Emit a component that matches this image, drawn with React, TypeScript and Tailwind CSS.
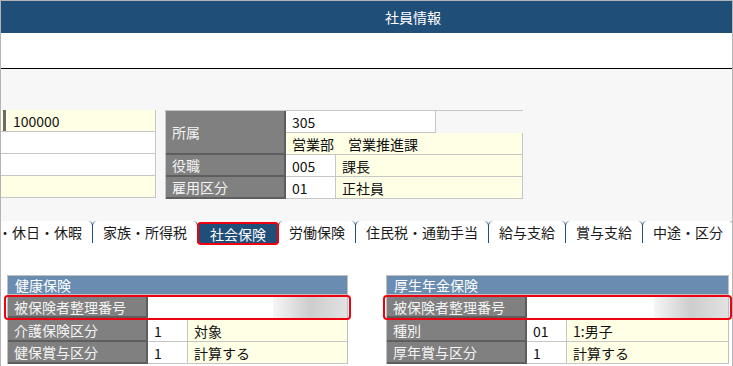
import React from 'react'

const Label = ({ text, className = '' }: { text: string; className?: string }) => (
  <div
    className={`flex shrink-0 items-center whitespace-nowrap border-b-2 border-r-2 border-[#5e5e5e] bg-[#808080] pl-[6px] text-[#f4f4f4] ${className}`}
  >
    {text}
  </div>
)

const Cell = ({
  text,
  yellow,
  className = '',
}: {
  text?: string
  yellow?: boolean
  className?: string
}) => (
  <div
    className={`flex items-center whitespace-nowrap border-b border-r border-[#c6c6c6] pl-[6px] text-[#111] ${
      yellow ? 'bg-[#ffffe6]' : 'bg-white'
    } ${className}`}
  >
    {text}
  </div>
)

// blurred-out value at the right end of the row
const Blur = () => (
  <div className="flex h-full flex-1 items-stretch justify-end bg-white">
    <div className="w-[74px] bg-gradient-to-r from-[#f6f6f6] via-[#cdcdcd] to-[#e2e2e2]" />
  </div>
)

const Section = ({
  title,
  rows,
}: {
  title: string
  rows: Array<{ label: string; code: string; name: string }>
}) => (
  <div className="flex flex-col">
    <div className="flex h-[20px] items-center border border-[#c0c0c0] bg-[#6a8cb0] pl-[7px] text-white">
      {title}
    </div>
    {/* highlighted row */}
    <div className="-mx-[3px] rounded-[4px] border-[2.5px] border-[#ee0010] px-px">
      <div className="flex h-[21px] border-x border-[#c0c0c0]">
        <Label text="被保険者整理番号" className="w-[140px]" />
        <Blur />
      </div>
    </div>
    {rows.map((row) => (
      <div key={row.label} className="flex h-[22px] border-x border-[#c0c0c0]">
        <Label text={row.label} className="w-[140px]" />
        <Cell text={row.code} className="w-[40px] shrink-0" />
        <Cell text={row.name} yellow className="flex-1 border-r-0" />
      </div>
    ))}
  </div>
)

const tabs = ['家族・所得税', '社会保険', '労働保険', '住民税・通勤手当', '給与支給', '賞与支給', '中途・区分']

export default function App() {
  return (
    <div className="relative h-[366px] w-[733px] overflow-hidden border-x border-t border-[#b4b4b4] bg-[#f7f7f7] font-['Noto_Sans_CJK_JP','Noto_Sans',sans-serif] text-[14px] leading-none">
      {/* title bar */}
      <header className="flex h-[32px] items-center bg-[#1f4e79] pl-[384px] text-white">社員情報</header>
      <div className="h-[35px] bg-white" />
      <div className="h-px bg-black" />

      {/* employee info */}
      <div className="flex items-start gap-[9px] pt-[41px]">
        <div className="flex w-[155px] flex-col">
          <div className="flex h-[22px] border-b border-r border-[#c6c6c6] bg-[#ffffe6]">
            <div className="ml-[2px] w-[3px] bg-[#6b6b6b]" />
            <div className="flex items-center pl-[7px] text-[#111]">100000</div>
          </div>
          <Cell className="h-[22px]" />
          <Cell className="h-[22px]" />
          <Cell yellow className="h-[22px]" />
        </div>

        <div className="flex w-[358px] flex-col border-l border-t border-[#c6c6c6]">
          <div className="flex h-[44px]">
            <Label text="所属" className="w-[120px]" />
            <div className="flex flex-1 flex-col">
              <Cell text="305" className="h-[22px] w-[150px]" />
              <Cell text="営業部　営業推進課" yellow className="h-[22px]" />
            </div>
          </div>
          <div className="flex h-[22px]">
            <Label text="役職" className="w-[120px]" />
            <Cell text="005" className="w-[50px]" />
            <Cell text="課長" yellow className="flex-1" />
          </div>
          <div className="flex h-[22px]">
            <Label text="雇用区分" className="w-[120px]" />
            <Cell text="01" className="w-[50px]" />
            <Cell text="正社員" yellow className="flex-1" />
          </div>
        </div>
      </div>

      {/* tabs */}
      <div className="mt-[22px] flex h-[22px] items-start border-b-2 border-[#1f4e79]">
        <div className="-ml-[14px] flex h-[22px] shrink-0 items-center whitespace-nowrap rounded-t-[5px] border-x border-[#1f4e79] bg-white px-[10px] text-[#1a1a1a]">
          ・休日・休暇
        </div>
        {tabs.map((t) =>
          t === '社会保険' ? (
            <div
              key={t}
              className="relative z-10 -ml-px mt-px flex h-[23px] shrink-0 items-center whitespace-nowrap rounded-[4px] border-[2.5px] border-[#ee0010] bg-[#1f4e79] px-[11px] text-white"
            >
              {t}
            </div>
          ) : (
            <div
              key={t}
              className="-ml-px flex h-[22px] shrink-0 items-center whitespace-nowrap rounded-t-[5px] border-x border-[#1f4e79] bg-white px-[10px] text-[#1a1a1a]"
            >
              {t}
            </div>
          )
        )}
      </div>

      {/* insurance panels */}
      <div className="flex h-full gap-[38px] bg-white pl-[6px] pt-[32px]">
        <div className="w-[341px]">
          <Section
            title="健康保険"
            rows={[
              { label: '介護保険区分', code: '1', name: '対象' },
              { label: '健保賞与区分', code: '1', name: '計算する' },
            ]}
          />
        </div>
        <div className="w-[343px]">
          <Section
            title="厚生年金保険"
            rows={[
              { label: '種別', code: '01', name: '1:男子' },
              { label: '厚年賞与区分', code: '1', name: '計算する' },
            ]}
          />
        </div>
      </div>
    </div>
  )
}
